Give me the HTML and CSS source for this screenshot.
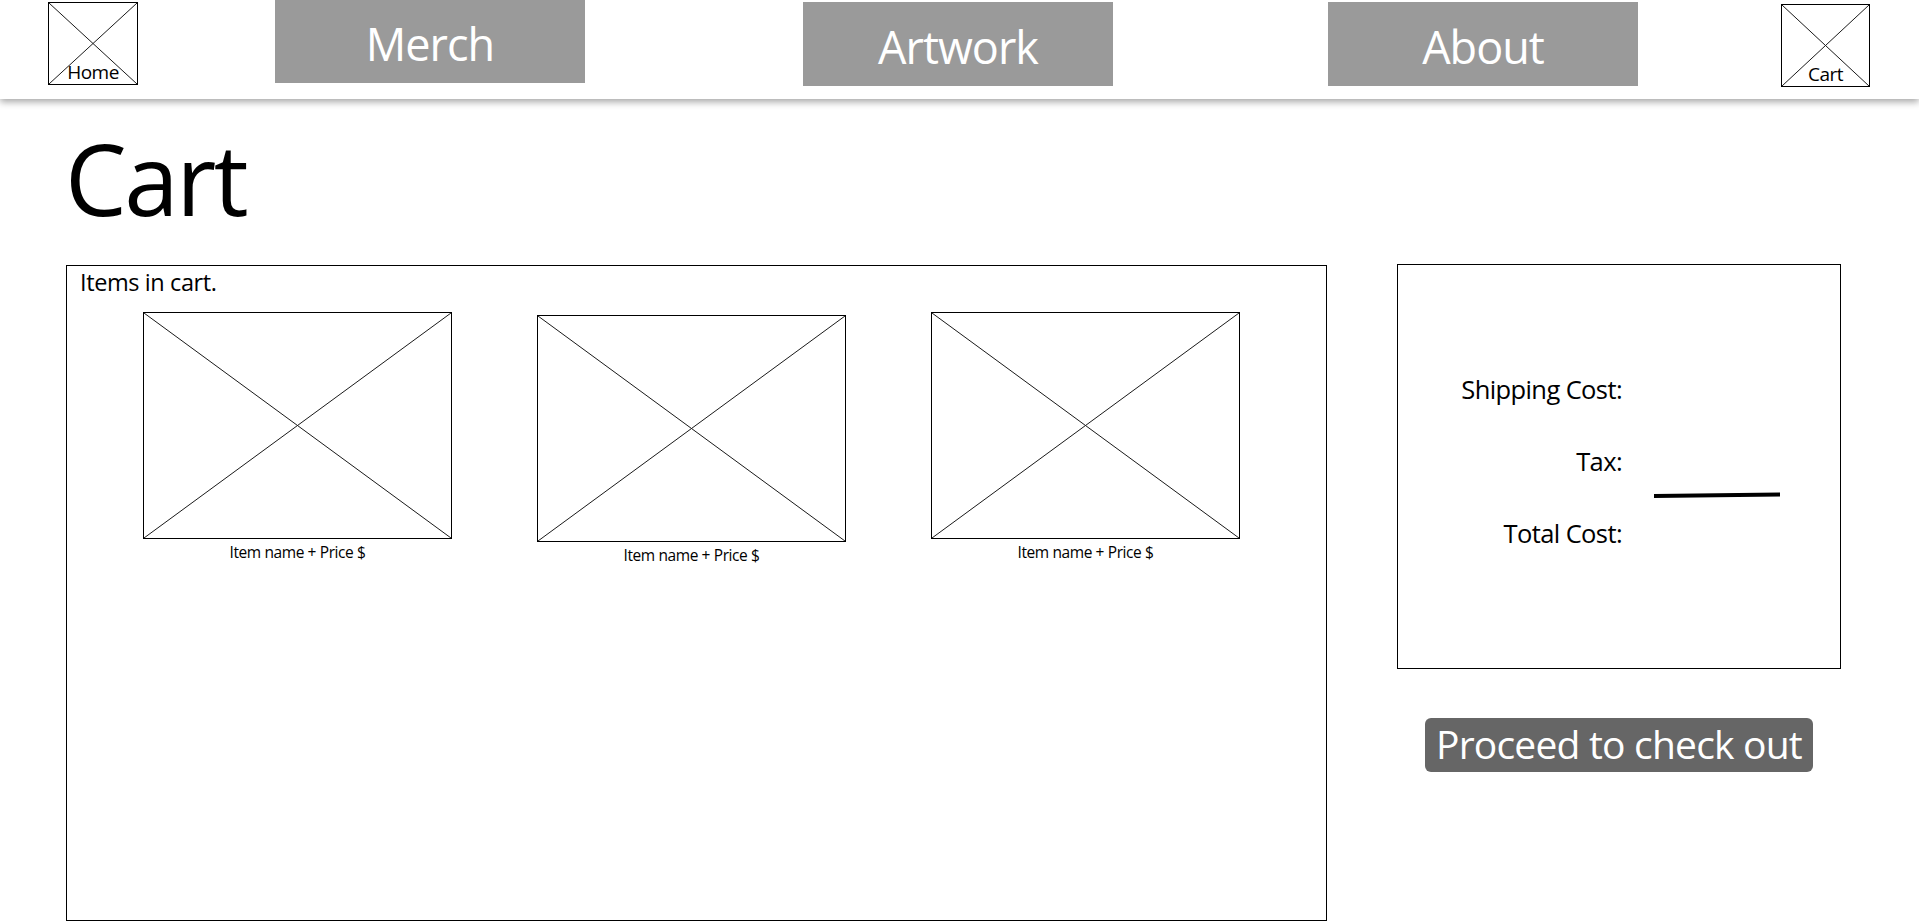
FILE: index.html
```html
<!DOCTYPE html>
<html lang="en">
<head>
  <meta charset="UTF-8" />
  <meta name="viewport" content="width=device-width, initial-scale=1" />
  <title>Cart</title>
  <link rel="stylesheet" href="styles.css">
</head>
<body>

<header>
  <a href="#" class="icon-box home-box">
    <svg class="cross" viewBox="0 0 100 100" preserveAspectRatio="none">
      <line x1="0" y1="0" x2="100" y2="100" />
      <line x1="100" y1="0" x2="0" y2="100" />
    </svg>
    <span>Home</span>
  </a>
  <a href="#" class="nav-btn btn-merch">Merch</a>
  <a href="#" class="nav-btn btn-artwork">Artwork</a>
  <a href="#" class="nav-btn btn-about">About</a>
  <a href="#" class="icon-box cart-box">
    <svg class="cross" viewBox="0 0 100 100" preserveAspectRatio="none">
      <line x1="0" y1="0" x2="100" y2="100" />
      <line x1="100" y1="0" x2="0" y2="100" />
    </svg>
    <span>Cart</span>
  </a>
</header>

<main>
  <h1 class="page-title">Cart</h1>

  <div class="cart-layout">
    <section class="items-box">
      <p class="items-label">Items in cart.</p>
      <div class="items-row">
        <div class="item">
          <div class="item-img">
            <svg class="cross" viewBox="0 0 100 100" preserveAspectRatio="none">
              <line x1="0" y1="0" x2="100" y2="100" />
              <line x1="100" y1="0" x2="0" y2="100" />
            </svg>
          </div>
          <p class="item-caption">Item name + Price $</p>
        </div>
        <div class="item item-low">
          <div class="item-img">
            <svg class="cross" viewBox="0 0 100 100" preserveAspectRatio="none">
              <line x1="0" y1="0" x2="100" y2="100" />
              <line x1="100" y1="0" x2="0" y2="100" />
            </svg>
          </div>
          <p class="item-caption">Item name + Price $</p>
        </div>
        <div class="item">
          <div class="item-img">
            <svg class="cross" viewBox="0 0 100 100" preserveAspectRatio="none">
              <line x1="0" y1="0" x2="100" y2="100" />
              <line x1="100" y1="0" x2="0" y2="100" />
            </svg>
          </div>
          <p class="item-caption">Item name + Price $</p>
        </div>
      </div>
    </section>

    <aside class="summary-col">
      <div class="summary-box">
        <div class="summary-label">Shipping Cost:</div>
        <div class="summary-value"></div>
        <div class="summary-label">Tax:</div>
        <div class="summary-value">
          <svg class="total-line" viewBox="0 0 126 6" preserveAspectRatio="none">
            <line x1="0" y1="4" x2="126" y2="2.5" />
          </svg>
        </div>
        <div class="summary-label">Total Cost:</div>
        <div class="summary-value"></div>
      </div>
      <button class="btn-checkout">Proceed to check out</button>
    </aside>
  </div>
</main>

</body>
</html>
```

FILE: styles.css
```css
* { box-sizing: border-box; margin: 0; padding: 0; }
body {
  font-family: 'Open Sans', 'Noto Sans', sans-serif;
  background: #fff;
  color: #000;
  overflow: hidden;
}
a { text-decoration: none; }

/* Barra de navegação */
header {
  height: 99px;
  display: flex;
  align-items: flex-start;
  padding-left: 48px;
  background: #fff;
  box-shadow: 0 3px 7px rgba(0,0,0,0.35);
  position: relative;
  z-index: 1;
}
.cross {
  position: absolute;
  inset: 0;
  width: 100%;
  height: 100%;
}
.cross line {
  stroke: #1a1a1a;
  stroke-width: 1;
  vector-effect: non-scaling-stroke;
}
.icon-box {
  position: relative;
  width: 90px;
  height: 83px;
  margin-top: 2px;
  border: 1.5px solid #000;
  display: flex;
  align-items: flex-end;
  justify-content: center;
  color: #000;
  font-size: 19px;
  letter-spacing: -0.5px;
  line-height: 1;
}
.icon-box span {
  position: relative;
  padding-bottom: 2px;
}
.cart-box {
  width: 89px;
  margin-top: 4px;
  margin-left: 143px;
}
.nav-btn {
  width: 310px;
  height: 84px;
  margin-top: 2px;
  background: #9a9a9a;
  color: #fff;
  font-size: 45px;
  letter-spacing: -1px;
  display: flex;
  align-items: center;
  justify-content: center;
  padding-top: 4px;
}
.btn-merch { margin-left: 137px; margin-top: 0; height: 83px; }
.btn-artwork { margin-left: 218px; }
.btn-about { margin-left: 215px; }

/* Conteúdo */
main {
  padding: 0 0 0 66px;
}
.page-title {
  font-size: 98px;
  font-weight: 400;
  line-height: 1;
  letter-spacing: -2.5px;
  margin-top: 30px;
  margin-left: -1px;
  height: 136px;
}
.cart-layout {
  display: flex;
  align-items: flex-start;
  gap: 70px;
}
.items-box {
  width: 1261px;
  height: 656px;
  border: 1.5px solid #000;
  padding: 1px 0 0 13px;
}
.items-label {
  font-size: 23.5px;
  letter-spacing: -0.4px;
  line-height: 30px;
}
.items-row {
  display: flex;
  gap: 85px;
  margin-top: 15px;
  padding-left: 63px;
}
.item {
  width: 309px;
}
.item-low {
  margin-top: 3px;
}
.item-img {
  position: relative;
  height: 227px;
  border: 1.5px solid #000;
}
.item-caption {
  text-align: center;
  font-size: 15.5px;
  letter-spacing: -0.4px;
  line-height: 20px;
  margin-top: 3px;
}

/* Resumo */
.summary-col {
  width: 444px;
  margin-top: -1px;
}
.summary-box {
  height: 405px;
  border: 1.5px solid #000;
  display: grid;
  grid-template-columns: 224px 1fr;
  grid-auto-rows: 72px;
  column-gap: 32px;
  padding-top: 88px;
}
.summary-label {
  text-align: right;
  font-size: 25.5px;
  letter-spacing: -0.6px;
  line-height: 72px;
}
.summary-value {
  display: flex;
  align-items: flex-end;
}
.total-line {
  width: 126px;
  height: 6px;
  margin-bottom: -1px;
}
.total-line line {
  stroke: #000;
  stroke-width: 4;
  vector-effect: non-scaling-stroke;
}
.btn-checkout {
  display: block;
  width: 388px;
  height: 54px;
  margin: 49px 0 0 28px;
  background: #666;
  color: #fff;
  border: none;
  border-radius: 6px;
  font-family: inherit;
  font-size: 39px;
  letter-spacing: -0.8px;
  line-height: 1;
  padding-bottom: 4px;
  cursor: pointer;
}
```
